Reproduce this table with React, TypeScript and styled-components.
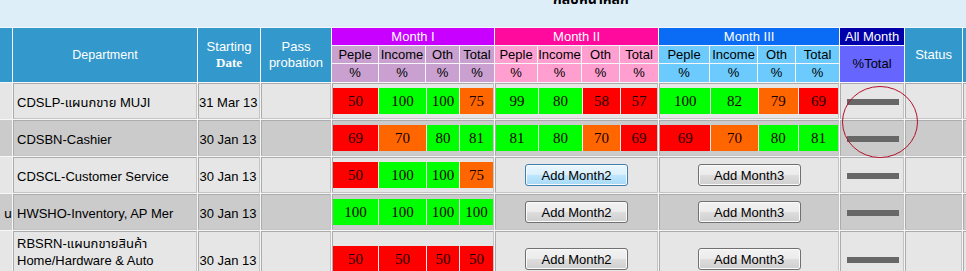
import styled, { createGlobalStyle, css } from 'styled-components';

const GlobalStyle = createGlobalStyle`
    html, body {
        margin : 0;
        padding : 0;
        overflow : hidden;
        background : #deeef8;
    }
    * {
        box-sizing : border-box;
    }
`;

type Tone = 'r' | 'g' | 'o';

interface RowData {
    lead : string;
    department : string[];
    date : string;
    month1 : [number, Tone][];
    month2? : [number, Tone][];
    month3? : [number, Tone][];
    hoverM2? : boolean;
}

const toneColor : Record<Tone, string> = {
    r : '#ff0000',
    g : '#00ff00',
    o : '#ff6600',
};

// column widths: lead, department, date, pass, 12 sub columns, all month, status, extra
const columnWidths = [12, 184, 62, 70, 46, 46, 33, 34, 42, 43, 37, 38, 50, 47, 37, 43, 64, 57, 60];

const rows : RowData[] = [
    {
        lead : '',
        department : ['CDSLP-แผนกขาย MUJI'],
        date : '31 Mar 13',
        month1 : [[50, 'r'], [100, 'g'], [100, 'g'], [75, 'o']],
        month2 : [[99, 'g'], [80, 'g'], [58, 'r'], [57, 'r']],
        month3 : [[100, 'g'], [82, 'g'], [79, 'o'], [69, 'r']],
    },
    {
        lead : '',
        department : ['CDSBN-Cashier'],
        date : '30 Jan 13',
        month1 : [[69, 'r'], [70, 'o'], [80, 'g'], [81, 'g']],
        month2 : [[81, 'g'], [80, 'g'], [70, 'o'], [69, 'r']],
        month3 : [[69, 'r'], [70, 'o'], [80, 'g'], [81, 'g']],
    },
    {
        lead : '',
        department : ['CDSCL-Customer Service'],
        date : '30 Jan 13',
        month1 : [[50, 'r'], [100, 'g'], [100, 'g'], [75, 'o']],
        hoverM2 : true,
    },
    {
        lead : 'น',
        department : ['HWSHO-Inventory, AP Mer'],
        date : '30 Jan 13',
        month1 : [[100, 'g'], [100, 'g'], [100, 'g'], [100, 'g']],
    },
    {
        lead : '',
        department : ['RBSRN-แผนกขายสินค้า', 'Home/Hardware & Auto', 'Accessories'],
        date : '30 Jan 13',
        month1 : [[50, 'r'], [50, 'r'], [50, 'r'], [50, 'r']],
    },
];

const Page = styled.div`
    position : relative;
    width : 966px;
    height : 271px;
    overflow : hidden;
    background : #deeef8;
    font-family : "Liberation Sans", Arial, "Noto Sans Thai", Tahoma, sans-serif;
`;

const TopBar = styled.div`
    height : 27px;
    overflow : hidden;
    padding-left : 553px;
`;

const Title = styled.div`
    margin-top : -9px;
    font-size : 14px;
    font-weight : bold;
    line-height : 16px;
    color : #000;
`;

const Grid = styled.table`
    border-collapse : separate;
    border-spacing : 1px;
    table-layout : fixed;
    width : 1025px;
    margin-left : -1px;
    background : #f4f6f8;
    font-size : 13px;
`;

const Col = styled.col<{ $w : number }>`
    width : ${props => props.$w}px;
`;

const HeadRow = styled.tr<{ $h : number }>`
    height : ${props => props.$h}px;
`;

const Th = styled.th<{ $bg : string; $dark? : boolean }>`
    background : ${props => props.$bg};
    color : ${props => props.$dark ? '#000' : '#fff'};
    font-weight : normal;
    font-size : 13px;
    line-height : 16px;
    padding : 0;
    text-align : center;
    vertical-align : middle;
    overflow : hidden;
    white-space : nowrap;
`;

const DeptHead = styled(Th)`
    font-size : 12.5px;
`;

const SerifLine = styled.span`
    display : block;
    font-family : "Liberation Serif", "Times New Roman", serif;
    font-weight : bold;
    font-size : 13px;
`;

const PlainLine = styled.span`
    display : block;
`;

const BodyRow = styled.tr<{ $tall? : boolean }>`
    height : ${props => props.$tall ? '53px' : '36px'};
`;

const Td = styled.td<{ $alt : boolean }>`
    background : ${props => props.$alt ? '#cbcbcb' : '#e6e6e6'};
    border : 1px solid #ababab;
    border-right-color : #c4c4c4;
    border-bottom-color : #c4c4c4;
    padding : 0;
    vertical-align : middle;
    overflow : hidden;
    white-space : nowrap;
    line-height : 17px;
    color : #000;
`;

const LeadCell = styled(Td)`
    border : none;
    text-align : right;
    padding : 3px 0 0 0;
`;

const DeptCell = styled(Td)`
    padding : 3px 3px 0 3px;
`;

const DateCell = styled(Td)`
    padding : 3px 2px 0 0;
    text-align : center;
`;

const ButtonCell = styled(Td)`
    text-align : center;
`;

const Scores = styled.div<{ $cols : string }>`
    display : grid;
    grid-template-columns : ${props => props.$cols};
    gap : 1px;
    background : #f0f0f0;
`;

const Score = styled.div<{ $tone : Tone }>`
    height : 26px;
    display : flex;
    align-items : center;
    justify-content : center;
    background : ${props => toneColor[props.$tone]};
    font-family : "Liberation Serif", "Times New Roman", serif;
    font-size : 15px;
    color : #1a0000;
`;

const AddButton = styled.button<{ $hover? : boolean }>`
    width : 103px;
    height : 22px;
    padding : 0;
    font-family : "Liberation Sans", Arial, sans-serif;
    font-size : 13px;
    color : #000;
    border : 1px solid #707070;
    border-radius : 3px;
    background : linear-gradient(#f2f2f2 0%, #ebebeb 50%, #dddddd 51%, #cfcfcf 100%);
    box-shadow : inset 0 0 0 1px #fbfbfb;
    vertical-align : middle;
    ${props => props.$hover && css`
        border-color : #3c7fb1;
        background : linear-gradient(#eaf6fd 0%, #d9f0fc 50%, #bee6fd 51%, #a7d9f5 100%);
    `}
`;

const Bar = styled.div`
    width : 52px;
    height : 6px;
    margin-left : 6px;
    margin-top : 1px;
    background : #676767;
`;

const Mark = styled.svg`
    position : absolute;
    left : 841px;
    top : 85px;
    pointer-events : none;
`;

function ScoreGroup(props : { scores : [number, Tone][]; cols : string }) {
    return (
        <Scores $cols={props.cols}>
            {props.scores.map(([value, tone], index) => (
                <Score key={index} $tone={tone}>{value}</Score>
            ))}
        </Scores>
    );
}

function App() {
    return (
        <Page>
            <GlobalStyle />
            <TopBar>
                <Title>กลับหน้าหลัก</Title>
            </TopBar>
            <Grid>
                <colgroup>
                    {columnWidths.map((w, i) => <Col key={i} $w={w} />)}
                </colgroup>
                <thead>
                    <HeadRow $h={17}>
                        <Th $bg="#3399cc" rowSpan={3} />
                        <DeptHead $bg="#3399cc" rowSpan={3}>Department</DeptHead>
                        <Th $bg="#3399cc" rowSpan={3}>
                            <PlainLine>Starting</PlainLine>
                            <SerifLine>Date</SerifLine>
                        </Th>
                        <Th $bg="#3399cc" rowSpan={3}>
                            <PlainLine>Pass</PlainLine>
                            <PlainLine>probation</PlainLine>
                        </Th>
                        <Th $bg="#c800ff" colSpan={4}>Month I</Th>
                        <Th $bg="#ff0a9c" colSpan={4}>Month II</Th>
                        <Th $bg="#0a6cf5" colSpan={4}>Month III</Th>
                        <Th $bg="#0000aa">All Month</Th>
                        <Th $bg="#3399cc" rowSpan={3}>Status</Th>
                        <Th $bg="#3399cc" rowSpan={3} />
                    </HeadRow>
                    <HeadRow $h={17}>
                        {['#c9a0d0', '#ff9fd0', '#6ccbfc'].map(bg => (
                            ['Peple', 'Income', 'Oth', 'Total'].map(label => (
                                <Th key={bg + label} $bg={bg} $dark>{label}</Th>
                            ))
                        ))}
                        <Th $bg="#6666ff" $dark rowSpan={2}>%Total</Th>
                    </HeadRow>
                    <HeadRow $h={18}>
                        {['#c9a0d0', '#ff9fd0', '#6ccbfc'].map(bg => (
                            [0, 1, 2, 3].map(i => (
                                <Th key={bg + i} $bg={bg} $dark>%</Th>
                            ))
                        ))}
                    </HeadRow>
                </thead>
                <tbody>
                    {rows.map((row, index) => {
                        const alt = index % 2 === 1;
                        return (
                            <BodyRow key={index} $tall={row.department.length > 1}>
                                <LeadCell $alt={alt}>{row.lead}</LeadCell>
                                <DeptCell $alt={alt}>
                                    {row.department.map(line => <PlainLine key={line}>{line}</PlainLine>)}
                                </DeptCell>
                                <DateCell $alt={alt}>{row.date}</DateCell>
                                <Td $alt={alt} />
                                <Td $alt={alt} colSpan={4}>
                                    <ScoreGroup scores={row.month1} cols="45fr 47fr 32fr 33fr" />
                                </Td>
                                {row.month2 ? (
                                    <Td $alt={alt} colSpan={4}>
                                        <ScoreGroup scores={row.month2} cols="42fr 43fr 37fr 36fr" />
                                    </Td>
                                ) : (
                                    <ButtonCell $alt={alt} colSpan={4}>
                                        <AddButton $hover={row.hoverM2}>Add Month2</AddButton>
                                    </ButtonCell>
                                )}
                                {row.month3 ? (
                                    <Td $alt={alt} colSpan={4}>
                                        <ScoreGroup scores={row.month3} cols="50fr 46fr 39fr 39fr" />
                                    </Td>
                                ) : (
                                    <ButtonCell $alt={alt} colSpan={4}>
                                        <AddButton>Add Month3</AddButton>
                                    </ButtonCell>
                                )}
                                <Td $alt={alt}><Bar /></Td>
                                <Td $alt={alt} />
                                <Td $alt={alt} />
                            </BodyRow>
                        );
                    })}
                </tbody>
            </Grid>
            <Mark width="78" height="74" viewBox="0 0 78 74">
                <ellipse cx="39" cy="37" rx="37.5" ry="35.5" fill="none" stroke="#b4102c" strokeWidth="1" />
            </Mark>
        </Page>
    );
}

export default App;
